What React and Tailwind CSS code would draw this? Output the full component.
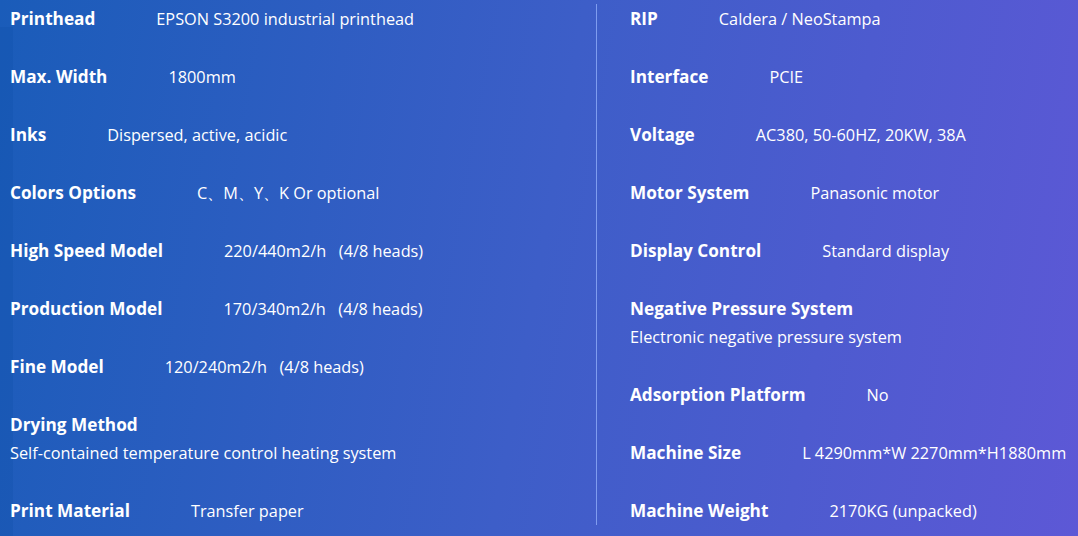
const left = [
  { label: "Printhead", value: "EPSON S3200 industrial printhead" },
  { label: "Max. Width", value: "1800mm" },
  { label: "Inks", value: "Dispersed, active, acidic" },
  { label: "Colors Options", value: "C、M、Y、K Or optional" },
  { label: "High Speed Model", value: "220/440m2/h\u00a0\u00a0\u00a0(4/8 heads)" },
  { label: "Production Model", value: "170/340m2/h\u00a0\u00a0\u00a0(4/8 heads)" },
  { label: "Fine Model", value: "120/240m2/h\u00a0\u00a0\u00a0(4/8 heads)" },
  { label: "Drying Method", value: "Self-contained temperature control heating system", block: true },
  { label: "Print Material", value: "Transfer paper" },
];

const right = [
  { label: "RIP", value: "Caldera / NeoStampa" },
  { label: "Interface", value: "PCIE" },
  { label: "Voltage", value: "AC380, 50-60HZ, 20KW, 38A" },
  { label: "Motor System", value: "Panasonic motor" },
  { label: "Display Control", value: "Standard display" },
  { label: "Negative Pressure System", value: "Electronic negative pressure system", block: true },
  { label: "Adsorption Platform", value: "No" },
  { label: "Machine Size", value: "L 4290mm*W 2270mm*H1880mm" },
  { label: "Machine Weight", value: "2170KG (unpacked)" },
];

function Spec({ label, value, block }) {
  if (block) {
    return (
      <li className="mb-[30px] last:mb-0 h-[56px] whitespace-nowrap">
        <div className="h-[28px] leading-[28px] text-[17.2px] font-bold">{label}</div>
        <div className="h-[28px] leading-[28px] text-[16.3px]">{value}</div>
      </li>
    );
  }
  return (
    <li className="mb-[30px] last:mb-0 h-[28px] flex items-baseline whitespace-nowrap">
      <span className="leading-[28px] text-[17.2px] font-bold">{label}</span>
      <span className="ml-[61px] leading-[28px] text-[16.3px]">{value}</span>
    </li>
  );
}

export default function App() {
  return (
    <div
      className="relative w-[1078px] h-[536px] overflow-hidden text-white bg-[linear-gradient(100deg,#1a5cb9_0%,#3d5ec8_50%,#5d58d6_100%)]"
      style={{ fontFamily: '"Segoe UI", "Open Sans", "Noto Sans", sans-serif' }}
    >
      {/* faint darker strip at left edge */}
      <div className="absolute left-0 top-[27px] bottom-0 w-[13px] bg-[#0f4fa8]/30"></div>
      <div className="relative grid grid-cols-[596px_1fr] items-start pt-[4px]">
        <ul className="pl-[10px] pt-[1px]">
          {left.map((s) => (
            <Spec key={s.label} {...s} />
          ))}
        </ul>
        <ul className="pl-[33px] pt-[1px] border-l border-[#9bb8ff]/70">
          {right.map((s) => (
            <Spec key={s.label} {...s} />
          ))}
        </ul>
      </div>
    </div>
  );
}
